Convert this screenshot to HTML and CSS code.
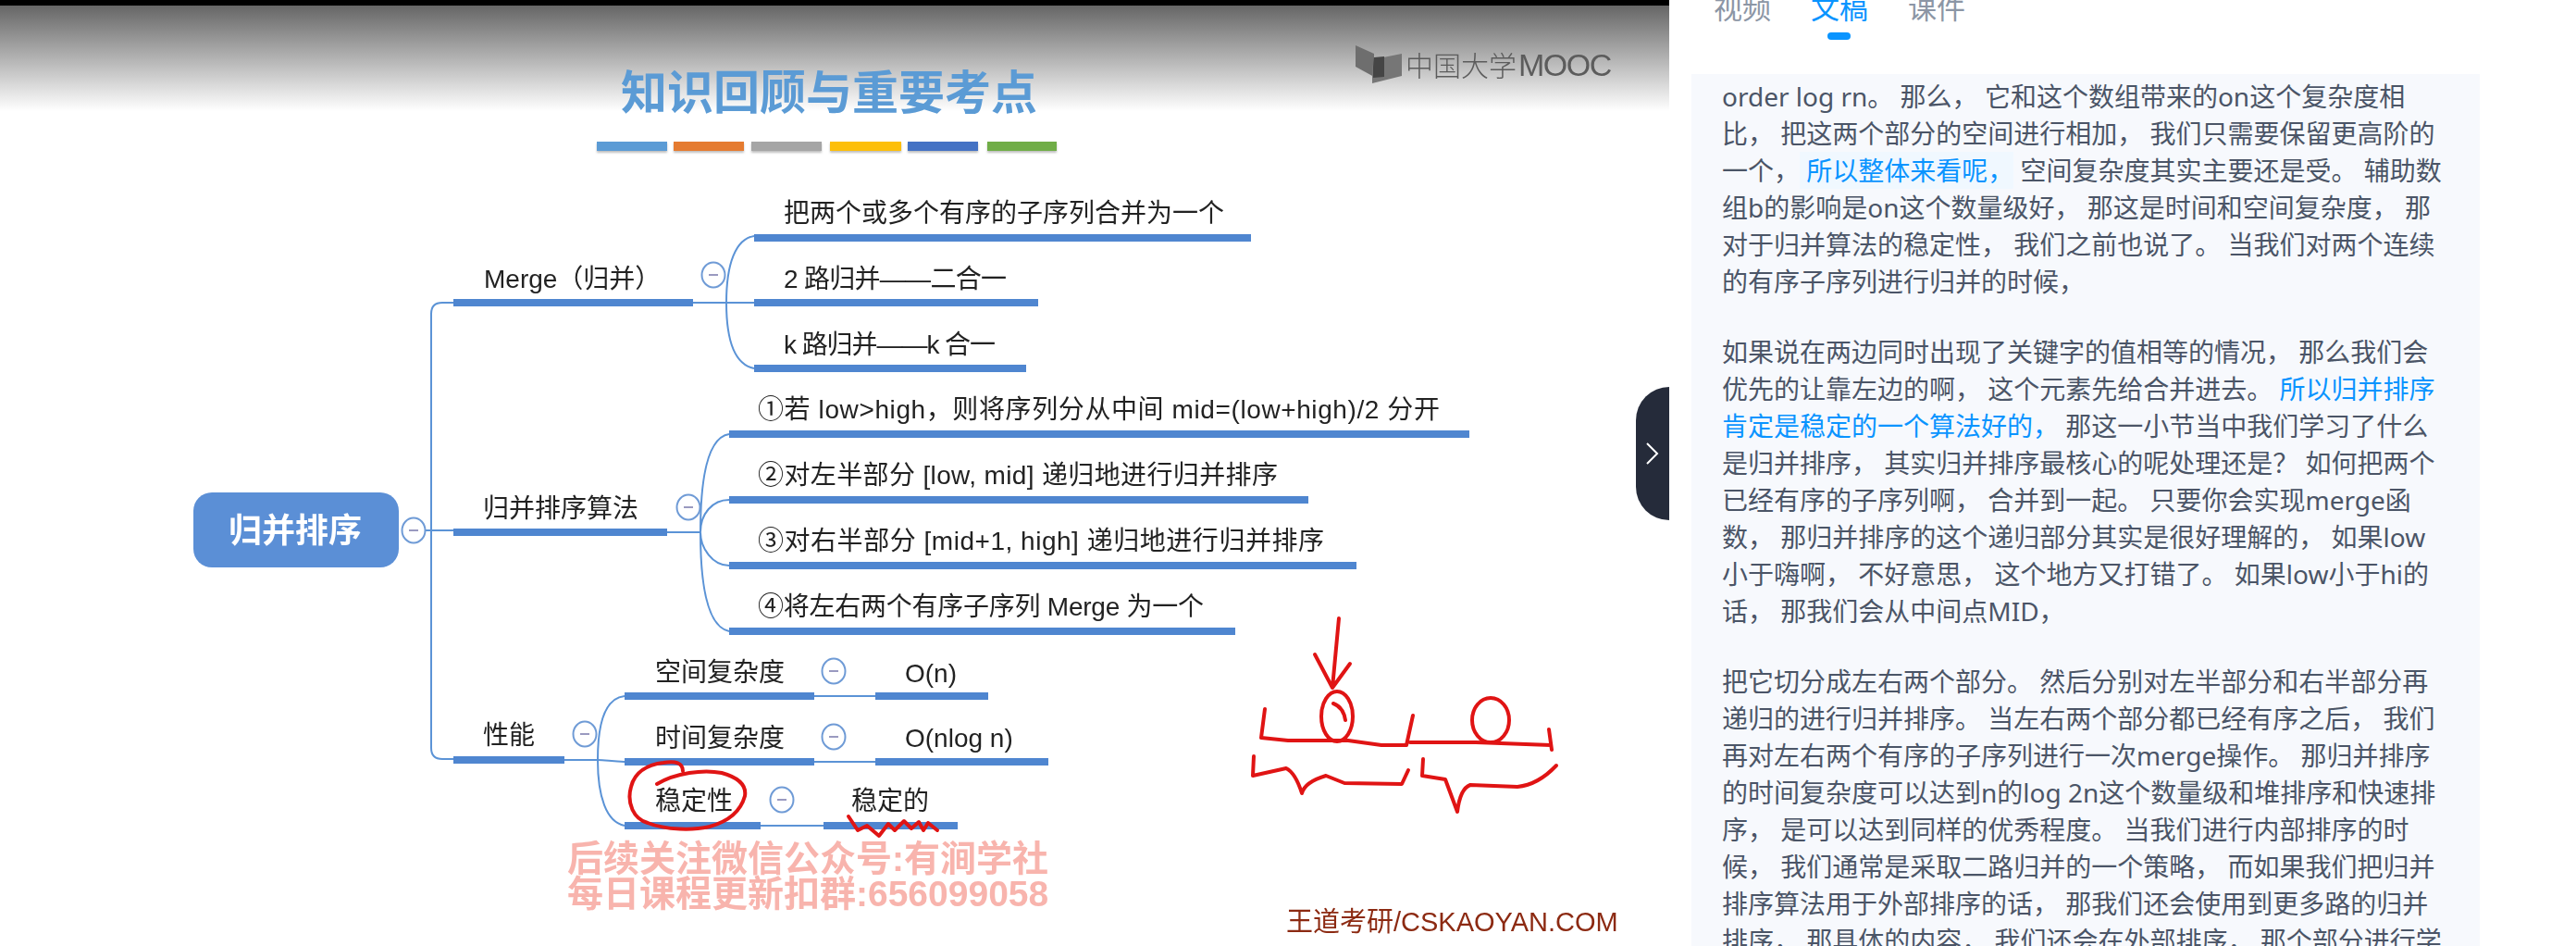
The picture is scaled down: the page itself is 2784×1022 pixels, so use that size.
FILE: index.html
```html
<!DOCTYPE html>
<html lang="zh-CN">
<head>
  <meta charset="UTF-8">
  <title>归并排序 - 文稿</title>
  <link rel="stylesheet" href="styles.css">
</head>
<body>
  <div class="page">
    <div class="video">
      <svg class="slide" width="1804" height="1022" viewBox="0 0 1804 1022">
        <!-- title -->
        <text class="title" x="671" y="118">知识回顾与重要考点</text>
        <rect class="tick" x="645" y="153" width="76" height="10" fill="#5b9bd5"/>
        <rect class="tick" x="728" y="153" width="76" height="10" fill="#e57b30"/>
        <rect class="tick" x="812" y="153" width="76" height="10" fill="#a5a5a5"/>
        <rect class="tick" x="897" y="153" width="77" height="10" fill="#fdbf0a"/>
        <rect class="tick" x="981" y="153" width="76" height="10" fill="#4472c4"/>
        <rect class="tick" x="1067" y="153" width="75" height="10" fill="#70ad47"/>

        <!-- logo -->
        <path class="logo-left" d="M1465 49 L1485 58 V83 L1465 72 Z"/>
        <path class="logo-right" d="M1515 58 V82 L1483 90 V72 Q1485 64 1495 62 Z"/>
        <path class="logo-fold" d="M1485 62 L1496 61 V83 L1484 84 V72 Z"/>
        <text class="logo-text" x="1519" y="82">中国大学<tspan class="logo-en" dx="2">MOOC</tspan></text>

        <!-- connectors -->
        <g class="wire">
          <path d="M460 573 H490"/>
          <path d="M490 327 H478 Q466 327 466 339 V808 Q466 820 478 820 H490"/>
          <path d="M749 327 H815"/>
          <path d="M815 255 C795 258 785 285 785 327 C785 370 795 394 815 398"/>
          <path d="M721 575 H757"/>
          <path d="M788 469 C768 472 757 505 757 575 C757 645 768 678 788 682"/>
          <path d="M788 540 C770 540 757 555 757 575 C757 592 770 611 788 611"/>
          <path d="M610 821 H646"/>
          <path d="M675 752 C655 754 646 780 646 821 C646 860 655 888 675 892"/>
          <path d="M646 821 C655 821 662 823 675 823"/>
          <path d="M880 752 H946"/>
          <path d="M880 823 H946"/>
          <path d="M822 892 H890"/>
        </g>

        <!-- root -->
        <rect class="root" x="209" y="532" width="222" height="81" rx="20"/>
        <text class="root-text" x="247" y="586">归并排序</text>

        <!-- branch bars -->
        <g class="bar">
          <rect x="490" y="323" width="259" height="8"/>
          <rect x="815" y="253" width="537" height="8"/>
          <rect x="815" y="323" width="307" height="8"/>
          <rect x="815" y="394" width="294" height="8"/>
          <rect x="490" y="571" width="231" height="8"/>
          <rect x="788" y="465" width="800" height="8"/>
          <rect x="788" y="536" width="626" height="8"/>
          <rect x="788" y="607" width="678" height="8"/>
          <rect x="788" y="678" width="547" height="8"/>
          <rect x="490" y="817" width="120" height="8"/>
          <rect x="675" y="748" width="205" height="8"/>
          <rect x="946" y="748" width="122" height="8"/>
          <rect x="675" y="819" width="205" height="8"/>
          <rect x="946" y="819" width="187" height="8"/>
          <rect x="675" y="888" width="147" height="8"/>
          <rect x="890" y="888" width="145" height="8"/>
        </g>

        <!-- collapse buttons -->
        <g class="fold">
          <ellipse cx="447" cy="573" rx="12.5" ry="13.5"/><path d="M442 573 H452"/>
          <ellipse cx="771" cy="297" rx="12.5" ry="13.5"/><path d="M766 297 H776"/>
          <ellipse cx="744" cy="548" rx="12.5" ry="13.5"/><path d="M739 548 H749"/>
          <ellipse cx="632" cy="793" rx="12.5" ry="13.5"/><path d="M627 793 H637"/>
          <ellipse cx="901" cy="725" rx="12.5" ry="13.5"/><path d="M896 725 H906"/>
          <ellipse cx="901" cy="796" rx="12.5" ry="13.5"/><path d="M896 796 H906"/>
          <ellipse cx="845" cy="864" rx="12.5" ry="13.5"/><path d="M840 864 H850"/>
        </g>

        <!-- node labels -->
        <g class="label">
          <text x="523" y="311">Merge（归并）</text>
          <text x="847" y="240">把两个或多个有序的子序列合并为一个</text>
          <text x="847" y="311" textLength="241">2 路归并——二合一</text>
          <text x="847" y="382" textLength="229">k 路归并——k 合一</text>
          <text x="522" y="559">归并排序算法</text>
          <text x="819" y="452" textLength="737">①若 low&gt;high，则将序列分从中间 mid=(low+high)/2 分开</text>
          <text x="819" y="523" textLength="562">②对左半部分 [low, mid] 递归地进行归并排序</text>
          <text x="819" y="594" textLength="612">③对右半部分 [mid+1, high] 递归地进行归并排序</text>
          <text x="819" y="665" textLength="482">④将左右两个有序子序列 Merge 为一个</text>
          <text x="522" y="804">性能</text>
          <text x="708" y="736">空间复杂度</text>
          <text x="978" y="737">O(n)</text>
          <text x="708" y="807">时间复杂度</text>
          <text x="978" y="807">O(nlog n)</text>
          <text x="708" y="875">稳定性</text>
          <text x="920" y="875">稳定的</text>
        </g>

        <!-- pen marks -->
        <g class="ink">
          <path d="M738 833 C738 824 730 822 717 824 C700 826 686 834 682 850 C677 868 685 885 700 889 C720 897 750 897 767 893 C785 888 800 878 805 860 C807 848 798 840 780 835 C760 831 730 835 710 847"/>
          <path d="M917 882 L927 897 L937 892 L950 903 L960 890 L967 897 L977 887 L985 895 L993 888 L998 897 L1003 889 L1013 897"/>
          <path d="M1447 668 L1440 743 M1421 707 L1440 743 L1459 717"/>
          <ellipse cx="1445" cy="774" rx="17" ry="27"/>
          <path d="M1441 760 Q1452 764 1454 778"/>
          <ellipse cx="1611" cy="778" rx="20" ry="24"/>
          <path d="M1367 766 L1363 797 L1392 800 L1421 800 L1457 800 L1493 805 L1520 805 L1527 773 M1524 802 L1595 802 L1676 805 M1674 788 L1677 810"/>
          <path d="M1355 817 L1354 838 L1390 830 Q1400 835 1407 857 Q1410 845 1433 838 L1453 846 L1515 847 L1522 832"/>
          <path d="M1538 820 L1537 838 L1562 842 L1575 877 Q1578 852 1589 848 L1640 850 Q1662 848 1682 827"/>
        </g>

        <!-- captions burned into the video -->
        <text class="promo" x="613" y="941">后续关注微信公众号:有涧学社</text>
        <text class="promo" x="613" y="979">每日课程更新扣群:656099058</text>
        <text class="credit" x="1390" y="1006">王道考研/CSKAOYAN.COM</text>
      </svg>
    </div>

    <div class="panel">
      <div class="tabs">
        <span class="tab">视频</span>
        <span class="tab tab-active">文稿</span>
        <span class="tab">课件</span>
      </div>
      <div class="transcript">
        <p>order log rn。 那么， 它和这个数组带来的on这个复杂度相<br>
        比， 把这两个部分的空间进行相加， 我们只需要保留更高阶的<br>
        一个，<span class="now"> 所以整体来看呢，</span> 空间复杂度其实主要还是受。 辅助数<br>
        组b的影响是on这个数量级好， 那这是时间和空间复杂度， 那<br>
        对于归并算法的稳定性， 我们之前也说了。 当我们对两个连续<br>
        的有序子序列进行归并的时候，</p>
        <p>如果说在两边同时出现了关键字的值相等的情况， 那么我们会<br>
        优先的让靠左边的啊， 这个元素先给合并进去。 <span class="mark">所以归并排序<br>
        肯定是稳定的一个算法好的，</span> 那这一小节当中我们学习了什么<br>
        是归并排序， 其实归并排序最核心的呢处理还是？ 如何把两个<br>
        已经有序的子序列啊， 合并到一起。 只要你会实现merge函<br>
        数， 那归并排序的这个递归部分其实是很好理解的， 如果low<br>
        小于嗨啊， 不好意思， 这个地方又打错了。 如果low小于hi的<br>
        话， 那我们会从中间点MID，</p>
        <p>把它切分成左右两个部分。 然后分别对左半部分和右半部分再<br>
        递归的进行归并排序。 当左右两个部分都已经有序之后， 我们<br>
        再对左右两个有序的子序列进行一次merge操作。 那归并排序<br>
        的时间复杂度可以达到n的log 2n这个数量级和堆排序和快速排<br>
        序， 是可以达到同样的优秀程度。 当我们进行内部排序的时<br>
        候， 我们通常是采取二路归并的一个策略， 而如果我们把归并<br>
        排序算法用于外部排序的话， 那我们还会使用到更多路的归并<br>
        排序， 那具体的内容， 我们还会在外部排序， 那个部分进行学</p>
      </div>
    </div>

    <div class="handle">
      <svg width="14" height="24" viewBox="0 0 14 24"><path d="M1 1 L12 12 L1 23"/></svg>
    </div>
  </div>
</body>
</html>
```

FILE: styles.css
```css
html, body {
  margin: 0;
  height: 100%;
  overflow: hidden;
  background: #fff;
}
.page {
  position: relative;
  display: flex;
  height: 1022px;
  overflow: hidden;
  font-family: "Noto Sans", "Noto Sans CJK SC", sans-serif;
}

/* video */
.video {
  width: 1804px;
  flex: none;
  background: linear-gradient(#000 0, #000 6px, #666 6px, #fff 120px) no-repeat;
  background-size: 100% 120px;
}
.slide {
  display: block;
  filter: blur(0.5px);
}
.slide text {
  font-family: "Liberation Sans", "Noto Sans CJK SC", sans-serif;
}
.title {
  font-size: 50px;
  font-weight: 700;
  fill: #5b9bd5;
}
.tick {
  filter: drop-shadow(0 2px 1px rgba(0, 0, 0, .25));
}
.logo-left { fill: #6e6e6e; }
.logo-right { fill: #767676; }
.logo-fold { fill: #454545; }
.logo-text {
  font-size: 30px;
  font-weight: 300;
  fill: #5c5c5c;
}
.logo-en {
  font-size: 34px;
  letter-spacing: -1.5px;
}
.wire {
  fill: none;
  stroke: #5b93d6;
  stroke-width: 2;
}
.root { fill: #5b8fd6; }
.root-text {
  font-size: 36px;
  font-weight: 700;
  fill: #fff;
}
.bar rect { fill: #4f86d0; }
.fold ellipse {
  fill: #fff;
  stroke: #6f9bd6;
  stroke-width: 2;
}
.fold path {
  fill: none;
  stroke: #9a9ac0;
  stroke-width: 2;
}
.label text {
  font-size: 28px;
  fill: #222;
}
.ink, .ink path, .ink ellipse {
  fill: none;
  stroke: #e01414;
  stroke-width: 4;
  stroke-linecap: round;
  stroke-linejoin: round;
}
.promo {
  font-size: 39px;
  font-weight: 700;
  fill: #f8b4ad;
}
.credit {
  font-size: 29px;
  fill: #8c2a12;
}

/* right panel */
.panel {
  flex: 1;
  min-width: 0;
}
.tabs {
  display: flex;
  gap: 43px;
  height: 94px;
  padding-left: 48px;
  margin-top: -14px;
}
.tab {
  position: relative;
  font-size: 31px;
  line-height: 44px;
  color: #8c96a5;
}
.tab-active {
  color: #0a94ff;
}
.tab-active::after {
  content: "";
  position: absolute;
  left: 18px;
  top: 49px;
  width: 25px;
  height: 8px;
  border-radius: 4px;
  background: #0a94ff;
}
.transcript {
  width: 819px;
  margin-left: 24px;
  padding: 4px 0 0 33px;
  background: #f7f9fd;
  height: 1000px;
  font-size: 28px;
  line-height: 40px;
  color: #4b5567;
}
.transcript p {
  margin: 0 0 36px;
  white-space: nowrap;
}
.now {
  color: #0a94ff;
  background: #f0f8ff;
  padding: 1px 0;
  white-space: pre;
}
.mark {
  color: #0a94ff;
}

/* collapse handle over the seam between video and panel */
.handle {
  position: absolute;
  left: 1768px;
  top: 418px;
  width: 36px;
  height: 144px;
  border-radius: 36px 0 0 36px;
  background: #252b3a;
  display: flex;
  align-items: center;
  justify-content: center;
}
.handle path {
  fill: none;
  stroke: #fff;
  stroke-width: 2;
}
```
